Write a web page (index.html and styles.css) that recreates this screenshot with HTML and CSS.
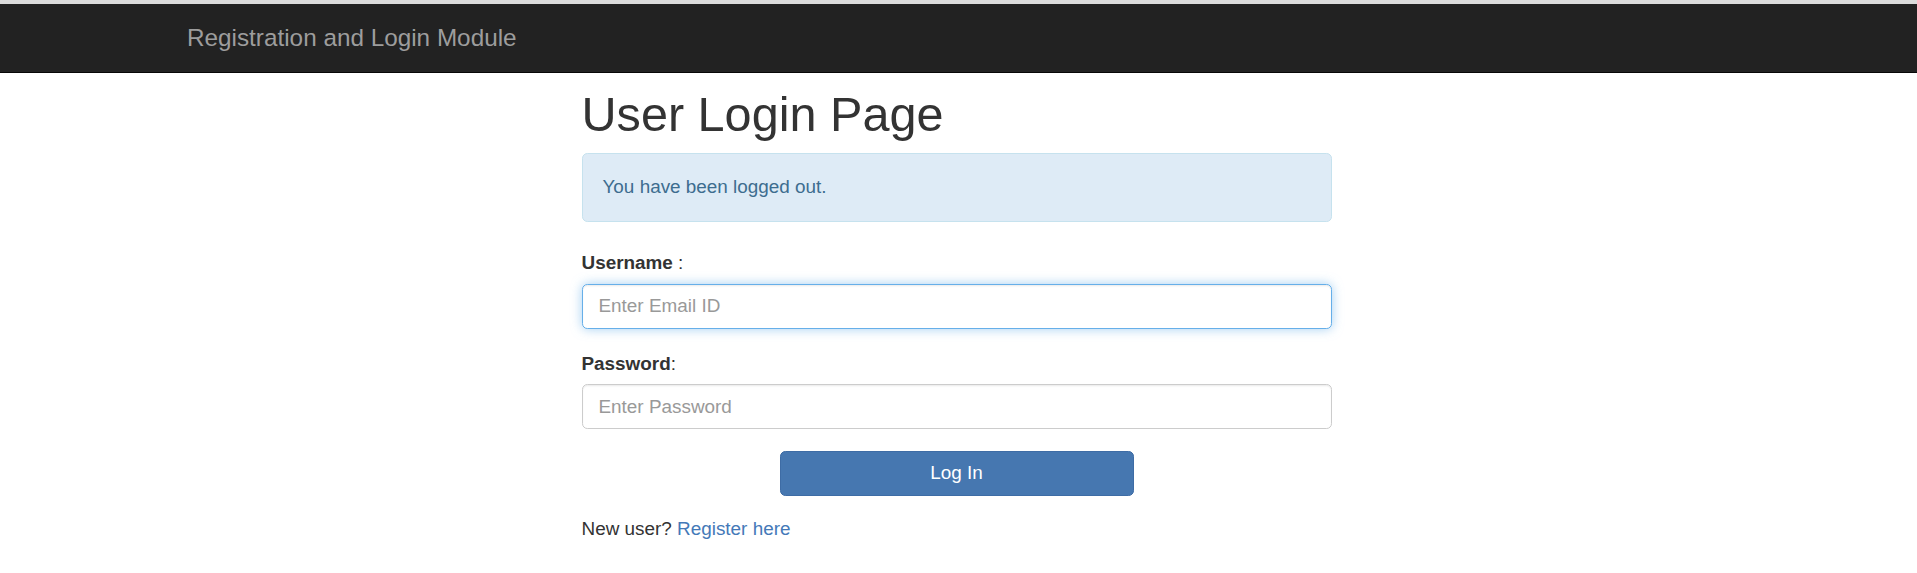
FILE: index.html
```html
<!DOCTYPE html>
<html lang="en">
<head>
<meta charset="utf-8">
<title>User Login Page</title>
<link rel="stylesheet" href="styles.css">
</head>
<body>
<div class="topstrip"></div>
<nav class="navbar">
  <div class="nav-inner">
    <a class="brand" href="#">Registration and Login Module</a>
  </div>
</nav>
<main class="container">
  <h1 class="title">User Login Page</h1>
  <div class="alert">You have been logged out.</div>
  <form class="login-form">
    <div class="form-group">
      <label class="label" for="username"><b>Username</b> :</label>
      <input class="input input-focus" id="username" type="text" placeholder="Enter Email ID">
    </div>
    <div class="form-group">
      <label class="label" for="password"><b>Password</b>:</label>
      <input class="input" id="password" type="password" placeholder="Enter Password">
    </div>
    <div class="actions">
      <button class="btn" type="button">Log In</button>
    </div>
  </form>
  <p class="register">New user? <a class="link" href="#">Register here</a></p>
</main>
</body>
</html>
```
FILE: styles.css
```css
* { box-sizing: border-box; }

html, body {
  margin: 0;
  padding: 0;
  background: #fff;
}

body {
  font-family: "Liberation Sans", Arial, sans-serif;
  font-size: 18.9px;
  line-height: 26.67px;
  color: #333;
}

.topstrip {
  height: 4px;
  background: #dcdcdc;
}

.navbar {
  height: 69px;
  background: #222;
  border-bottom: 1px solid #080808;
}

.nav-inner {
  height: 100%;
  display: flex;
  align-items: center;
  padding: 0 187px;
}

.brand {
  font-size: 24.3px;
  line-height: 26px;
  color: #9d9d9d;
  text-decoration: none;
}

.container {
  width: 750px;
  margin: 0 auto;
  transform: translateX(-2px);
}

.title {
  margin: 15px 0 12px;
  font-size: 48.6px;
  line-height: 52.8px;
  font-weight: 400;
  color: #333;
}

.alert {
  padding: 20px;
  height: 69px;
  margin-bottom: 28.67px;
  background: #deebf6;
  border: 1.33px solid #c6e2ee;
  border-radius: 5.33px;
  color: #3d6d8f;
}

.form-group {
  margin-bottom: 21.5px;
}

.label {
  display: block;
  margin-bottom: 6.67px;
  font-weight: 400;
  color: #333;
}

.label b {
  font-weight: 700;
}

.input {
  display: block;
  width: 100%;
  height: 45.33px;
  padding: 8px 16px;
  font-family: inherit;
  font-size: 18.9px;
  line-height: 26.67px;
  color: #555;
  background: #fff;
  border: 1.33px solid #ccc;
  border-radius: 5.33px;
  box-shadow: inset 0 1.33px 1.33px rgba(0, 0, 0, 0.075);
  outline: none;
}

.input::placeholder {
  color: #999;
}

.input-focus {
  border-color: #66afe9;
  box-shadow: inset 0 1.33px 1.33px rgba(0, 0, 0, 0.075), 0 0 10.67px rgba(102, 175, 233, 0.6);
}

.actions {
  display: flex;
  justify-content: center;
}

.btn {
  width: 354px;
  height: 45.33px;
  padding: 8px 16px;
  font-family: inherit;
  font-size: 18.9px;
  line-height: 26.67px;
  color: #fff;
  background: #4677b0;
  border: 1.33px solid #3e6ca5;
  border-radius: 5.33px;
  cursor: pointer;
}

.register {
  margin: 20px 0 0;
  color: #333;
}

.link {
  color: #4479b8;
  text-decoration: none;
}
```
